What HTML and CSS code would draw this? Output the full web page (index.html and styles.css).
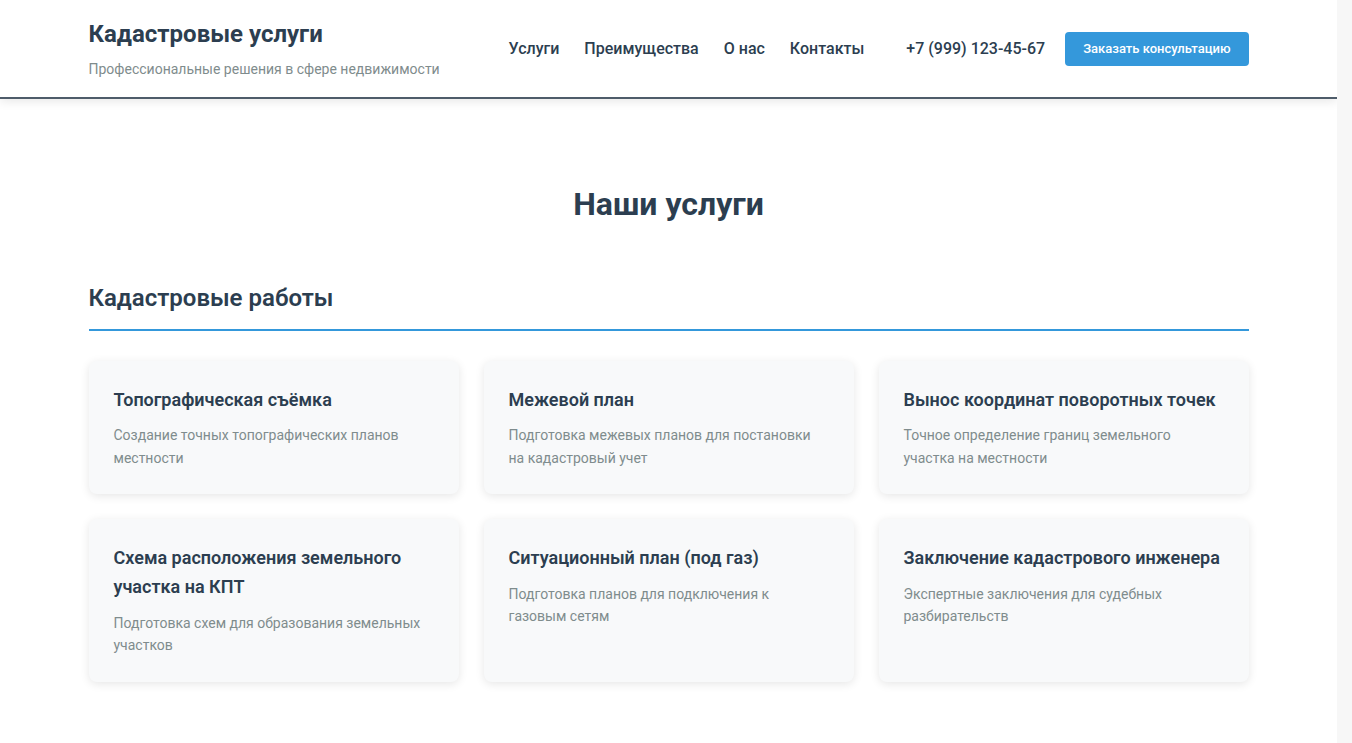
FILE: index.html
```html
<!DOCTYPE html>
<html lang="ru">
<head>
    <meta charset="UTF-8">
    <meta name="viewport" content="width=device-width, initial-scale=1.0">
    <title>Кадастровые услуги</title>
    <link rel="stylesheet" href="styles.css">
</head>
<body>
    <header class="header">
        <div class="container header-inner">
            <div class="logo">
                <h1 class="logo-title">Кадастровые услуги</h1>
                <p class="logo-subtitle">Профессиональные решения в сфере недвижимости</p>
            </div>
            <div class="header-right">
                <nav>
                    <ul class="nav">
                        <li><a href="#services">Услуги</a></li>
                        <li><a href="#advantages">Преимущества</a></li>
                        <li><a href="#about">О нас</a></li>
                        <li><a href="#contacts">Контакты</a></li>
                    </ul>
                </nav>
                <div class="header-contacts">
                    <span class="phone">+7 (999) 123-45-67</span>
                    <button class="btn">Заказать консультацию</button>
                </div>
            </div>
        </div>
    </header>

    <section class="services" id="services">
        <div class="container">
            <h2 class="section-title">Наши услуги</h2>

            <div class="category">
                <h3 class="category-title">Кадастровые работы</h3>
                <div class="cards">
                    <div class="card">
                        <h4>Топографическая съёмка</h4>
                        <p>Создание точных топографических планов местности</p>
                    </div>
                    <div class="card">
                        <h4>Межевой план</h4>
                        <p>Подготовка межевых планов для постановки на кадастровый учет</p>
                    </div>
                    <div class="card">
                        <h4>Вынос координат поворотных точек</h4>
                        <p>Точное определение границ земельного участка на местности</p>
                    </div>
                    <div class="card">
                        <h4>Схема расположения земельного участка на КПТ</h4>
                        <p>Подготовка схем для образования земельных участков</p>
                    </div>
                    <div class="card">
                        <h4>Ситуационный план (под газ)</h4>
                        <p>Подготовка планов для подключения к газовым сетям</p>
                    </div>
                    <div class="card">
                        <h4>Заключение кадастрового инженера</h4>
                        <p>Экспертные заключения для судебных разбирательств</p>
                    </div>
                </div>
            </div>

            <div class="category">
                <h3 class="category-title">Технические планы</h3>
                <div class="cards">
                    <div class="card">
                        <h4>Технический план дома</h4>
                        <p>Постановка жилого дома на кадастровый учет</p>
                    </div>
                    <div class="card">
                        <h4>Технический план помещения</h4>
                        <p>Оформление квартир и нежилых помещений</p>
                    </div>
                    <div class="card">
                        <h4>Акт обследования</h4>
                        <p>Снятие с учета снесённых объектов недвижимости</p>
                    </div>
                </div>
            </div>

            <div class="category">
                <h3 class="category-title">Землеустройство</h3>
                <div class="cards">
                    <div class="card">
                        <h4>Раздел земельного участка</h4>
                        <p>Образование новых участков из существующего</p>
                    </div>
                    <div class="card">
                        <h4>Объединение участков</h4>
                        <p>Подготовка документов для объединения смежных участков</p>
                    </div>
                    <div class="card">
                        <h4>Исправление реестровой ошибки</h4>
                        <p>Уточнение границ и площади земельного участка</p>
                    </div>
                </div>
            </div>
        </div>
    </section>

    <section class="advantages" id="advantages">
        <div class="container">
            <h2 class="section-title">Преимущества</h2>
            <div class="cards">
                <div class="card">
                    <h4>Опыт более 10 лет</h4>
                    <p>Тысячи выполненных проектов по всему региону</p>
                </div>
                <div class="card">
                    <h4>Точные сроки</h4>
                    <p>Фиксируем сроки выполнения работ в договоре</p>
                </div>
                <div class="card">
                    <h4>Современное оборудование</h4>
                    <p>GNSS-приёмники и электронные тахеометры</p>
                </div>
            </div>
        </div>
    </section>

    <section class="about" id="about">
        <div class="container">
            <h2 class="section-title">О нас</h2>
            <p class="about-text">Мы команда аттестованных кадастровых инженеров. Выполняем полный комплекс кадастровых и землеустроительных работ для частных лиц и организаций.</p>
        </div>
    </section>

    <section class="contacts" id="contacts">
        <div class="container">
            <h2 class="section-title">Контакты</h2>
            <div class="cards">
                <div class="card">
                    <h4>Телефон</h4>
                    <p>+7 (999) 123-45-67</p>
                </div>
                <div class="card">
                    <h4>Email</h4>
                    <p>info@kadastr.ru</p>
                </div>
                <div class="card">
                    <h4>Режим работы</h4>
                    <p>Пн–Пт, 9:00–18:00</p>
                </div>
            </div>
        </div>
    </section>

    <footer class="footer">
        <div class="container">
            <p>© 2024 Кадастровые услуги</p>
        </div>
    </footer>
</body>
</html>
```

FILE: styles.css
```css
* {
    box-sizing: border-box;
}
html {
    background: #f7f7f7;
}
body {
    font-family: Roboto, "Liberation Sans", Arial, sans-serif;
    color: #2c3e50;
    line-height: 1.6;
    margin: 0 15px 0 0;
    background: white;
}
.container {
    max-width: 1200px;
    margin: 0 auto;
    padding: 0 20px;
}
.header {
    position: sticky;
    top: 0;
    z-index: 10;
    background: white;
    border-bottom: 2px solid #4e5c6a;
    box-shadow: 0 2px 10px rgba(0,0,0,0.1);
}
.header-inner {
    display: flex;
    justify-content: space-between;
    align-items: center;
    padding-top: 18px;
    padding-bottom: 17px;
}
.logo-title {
    font-size: 24px;
    font-weight: 700;
    line-height: 1.4;
    margin: 0;
}
.logo-subtitle {
    font-size: 14px;
    color: #7f8c8d;
    margin: 6px 0 0;
}
.header-right {
    display: flex;
    align-items: center;
}
.nav {
    display: flex;
    gap: 25px;
    list-style: none;
    margin: 0;
    padding: 0;
}
.nav a {
    color: #2c3e50;
    text-decoration: none;
    font-size: 16px;
    font-weight: 500;
}
.header-contacts {
    display: flex;
    align-items: center;
    gap: 20px;
    margin-left: 42px;
}
.phone {
    font-size: 16px;
    font-weight: 500;
}
.btn {
    background: #3498db;
    color: white;
    border: none;
    border-radius: 4px;
    font-family: inherit;
    font-size: 13px;
    font-weight: 500;
    line-height: 1.6;
    padding: 7px 18px;
    cursor: pointer;
}
.btn:hover {
    background: #2980b9;
}
.services {
    padding: 80px 0 30px;
}
.section-title {
    text-align: center;
    font-size: 32px;
    font-weight: 700;
    margin: 0 0 49px;
}
.category {
    margin-bottom: 60px;
}
.category-title {
    font-size: 24px;
    font-weight: 600;
    margin: 0 0 30px;
    padding-bottom: 11px;
    border-bottom: 2px solid #3498db;
}
.cards {
    display: grid;
    grid-template-columns: repeat(3, 1fr);
    gap: 25px;
}
.card {
    background: #f8f9fa;
    border-radius: 8px;
    padding: 25px;
    box-shadow: 0 2px 10px rgba(0,0,0,0.1);
}
.card h4 {
    font-size: 18px;
    font-weight: 600;
    margin: 0 0 10px;
}
.card p {
    font-size: 14px;
    color: #7f8c8d;
    margin: 0;
}
.advantages {
    padding: 80px 0;
    background: #f8f9fa;
}
.advantages .card {
    background: white;
}
.about,
.contacts {
    padding: 80px 0;
}
.about-text {
    text-align: center;
    font-size: 16px;
    color: #7f8c8d;
    max-width: 700px;
    margin: 0 auto;
}
.footer {
    background: #2c3e50;
    color: #bdc3c7;
    text-align: center;
    padding: 30px 0;
    font-size: 14px;
}
.footer p {
    margin: 0;
}
```
